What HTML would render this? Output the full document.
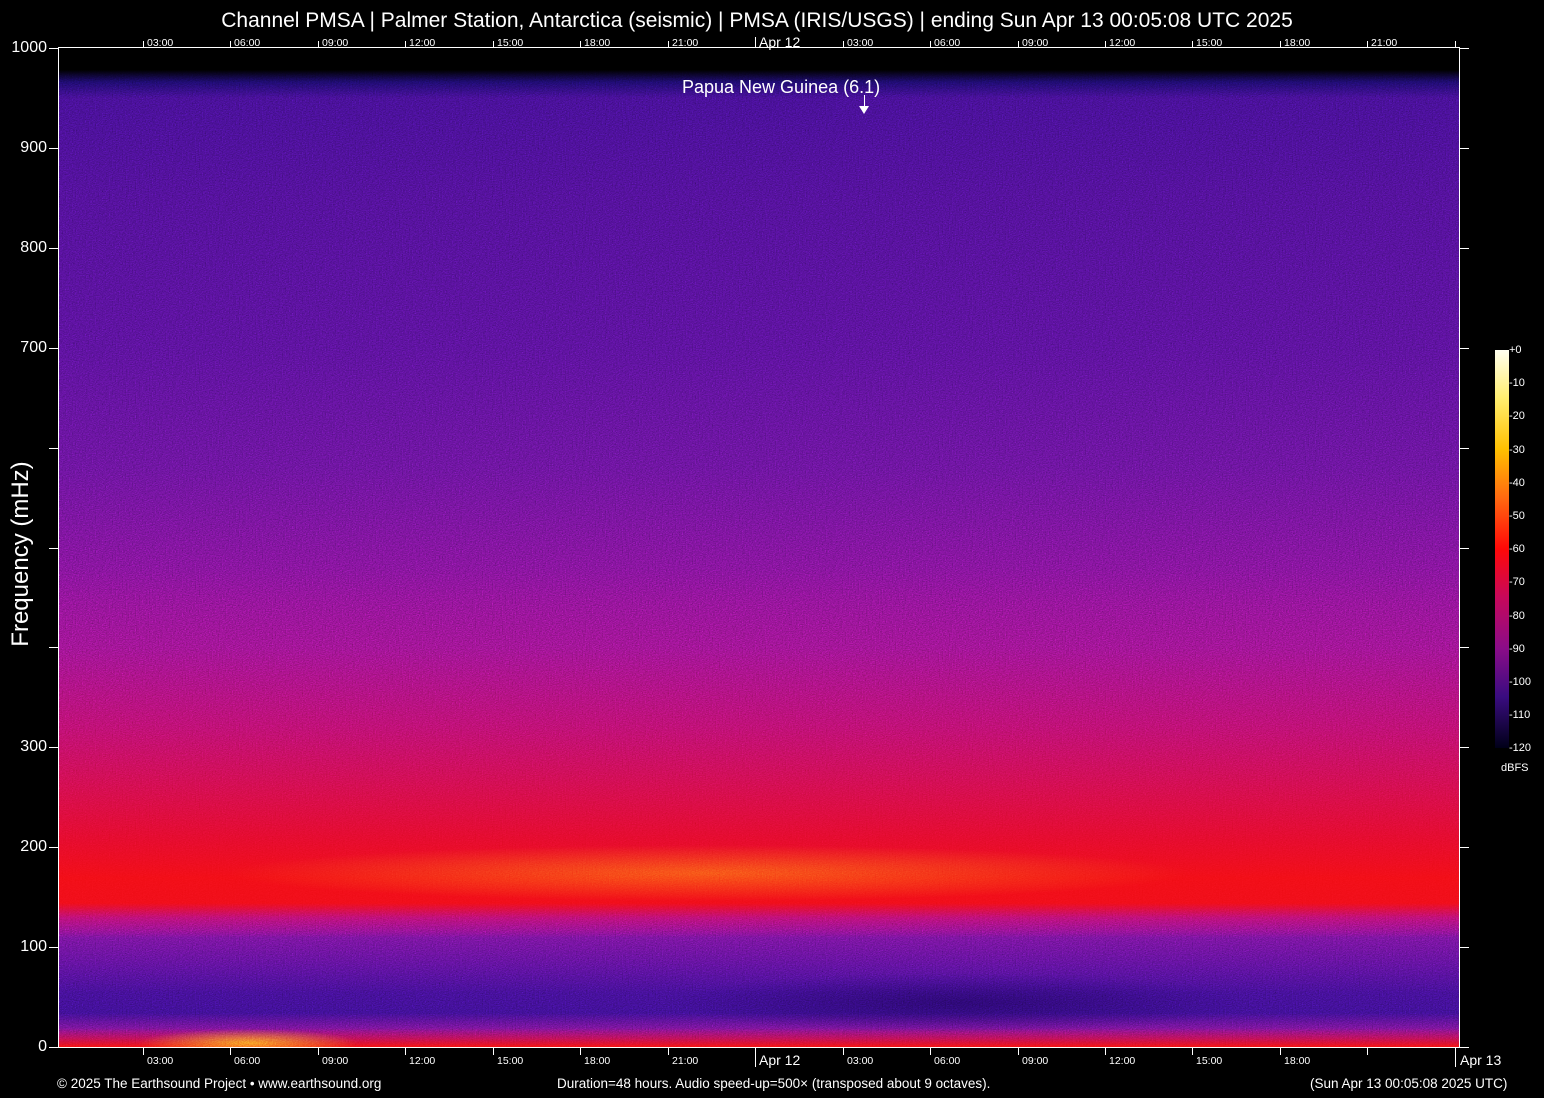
<!DOCTYPE html>
<html><head><meta charset="utf-8"><style>
body{margin:0;background:#000;width:1544px;height:1098px;overflow:hidden;position:relative;font-family:"Liberation Sans",sans-serif;color:#fff}
.a{position:absolute}
#spec{left:58px;top:48px;width:1401px;height:999px;
background:
radial-gradient(ellipse 480px 28px at 650px 825px,rgba(255,140,20,.5),rgba(255,60,0,0) 100%),
radial-gradient(ellipse 110px 14px at 190px 995px,rgba(255,170,30,.8),rgba(255,60,0,0) 100%),
radial-gradient(ellipse 300px 30px at 900px 955px,rgba(20,0,70,.5),rgba(20,0,80,0) 100%),
linear-gradient(to bottom,#000 0px,#000 22px,#1a0a60 34px,#3e0e82 50px,#480f86 150px,#50108a 300px,#5e128c 420px,#74128a 520px,#8e1280 600px,#b20e64 680px,#cc0c44 740px,#e00a28 790px,#f00c14 830px,#ee0c16 855px,#b00e6a 870px,#6a128e 890px,#52108c 920px,#3c0e84 945px,#380e82 965px,#6a1288 980px,#b00e50 990px,#f01010 999px);}
#noise{left:58px;top:48px;width:1401px;height:999px;mix-blend-mode:overlay;opacity:.9}
.tk{position:absolute;background:#fff}
.lt{font-size:11px;position:absolute}
.yl{font-size:16px;position:absolute;text-align:right;width:47px}
</style></head><body>
<div class="a" style="top:9px;left:0;width:1514px;text-align:center;font-size:21px">Channel PMSA | Palmer Station, Antarctica (seismic) | PMSA (IRIS/USGS) | ending Sun Apr 13 00:05:08 UTC 2025</div>
<div id="spec" class="a"></div>
<svg id="noise" class="a"><filter id="f"><feTurbulence type="fractalNoise" baseFrequency="0.7 1.2" numOctaves="1" seed="3"/><feColorMatrix type="saturate" values="0"/><feComponentTransfer><feFuncR type="linear" slope="1.8" intercept="-0.4"/><feFuncG type="linear" slope="1.8" intercept="-0.4"/><feFuncB type="linear" slope="1.8" intercept="-0.4"/></feComponentTransfer></filter><rect width="100%" height="100%" filter="url(#f)"/></svg>
<div class="tk" style="left:58px;top:47px;width:1402px;height:1px"></div>
<div class="tk" style="left:58px;top:1047px;width:1402px;height:1px"></div>
<div class="tk" style="left:58px;top:47px;width:1px;height:1001px"></div>
<div class="tk" style="left:1459px;top:47px;width:1px;height:1001px"></div>
<div class="a" style="left:682px;top:77px;font-size:18px">Papua New Guinea (6.1)</div>
<div class="tk" style="left:864px;top:95px;width:1px;height:12px"></div>
<div class="a" style="left:859px;top:106px;width:0;height:0;border-left:5px solid transparent;border-right:5px solid transparent;border-top:8px solid #fff"></div>
<div class="a" style="left:6px;top:460px;width:30px;height:190px"><div style="position:absolute;left:-80px;top:80px;width:190px;transform:rotate(-90deg);font-size:24px;text-align:center;white-space:nowrap">Frequency (mHz)</div></div>
<div class="a" style="left:1495px;top:350px;width:14px;height:398px;background:linear-gradient(to bottom,#fffff0 0%,#ffee70 12%,#ffc000 25%,#ff6a10 37%,#ff0808 50%,#c8085a 62%,#8a0c88 75%,#3a0c80 87%,#000018 100%)"></div>
<div class="a" style="left:1501px;top:762px;font-size:11px">dBFS</div>
<div id="g"></div>
<div class="a" style="left:57px;top:1076px;font-size:13.5px">© 2025 The Earthsound Project • www.earthsound.org</div>
<div class="a" style="left:557px;top:1076px;font-size:13.5px">Duration=48 hours. Audio speed-up=500× (transposed about 9 octaves).</div>
<div class="a" style="left:1310px;top:1076px;font-size:13.5px">(Sun Apr 13 00:05:08 2025 UTC)</div>
<script>
var h='';
var ys=['1000','900','800','700','','','','300','200','100','0'];
for(var i=0;i<11;i++){var y=48+i*99.9;
h+='<div class="tk" style="left:49px;top:'+Math.round(y)+'px;width:9px;height:1px"></div>';
h+='<div class="tk" style="left:1460px;top:'+Math.round(y)+'px;width:9px;height:1px"></div>';
if(ys[i])h+='<div class="yl" style="left:0px;top:'+Math.round(y-9)+'px">'+ys[i]+'</div>';}
var tl=['03:00','06:00','09:00','12:00','15:00','18:00','21:00','Apr 12','03:00','06:00','09:00','12:00','15:00','18:00','21:00',''];
var bl=['03:00','06:00','09:00','12:00','15:00','18:00','21:00','Apr 12','03:00','06:00','09:00','12:00','15:00','18:00','',''];
for(var i=0;i<16;i++){var x=Math.round(143+i*87.45);
var big=(i==7);
h+='<div class="tk" style="left:'+x+'px;top:'+(big?37:41)+'px;width:1px;height:'+(big?11:7)+'px"></div>';
h+='<div class="tk" style="left:'+x+'px;top:1048px;width:1px;height:'+(big?19:7)+'px"></div>';
var fs=big?'14px':'10.5px';
if(tl[i])h+='<div class="lt" style="left:'+(x+4)+'px;top:'+(big?34:37)+'px;font-size:'+fs+'">'+tl[i]+'</div>';
if(bl[i])h+='<div class="lt" style="left:'+(x+4)+'px;top:'+(big?1052:1055)+'px;font-size:'+fs+'">'+bl[i]+'</div>';}
h+='<div class="tk" style="left:1455px;top:1048px;width:1px;height:19px"></div><div class="lt" style="left:1460px;top:1052px;font-size:14px">Apr 13</div>';
var db=['+0','-10','-20','-30','-40','-50','-60','-70','-80','-90','-100','-110','-120'];
for(var i=0;i<13;i++){var y=Math.round(351+i*33.2);h+='<div class="lt" style="left:1509px;top:'+(y-7)+'px;font-size:11px">'+db[i]+'</div>';}
document.getElementById('g').innerHTML=h;
</script>
</body></html>
